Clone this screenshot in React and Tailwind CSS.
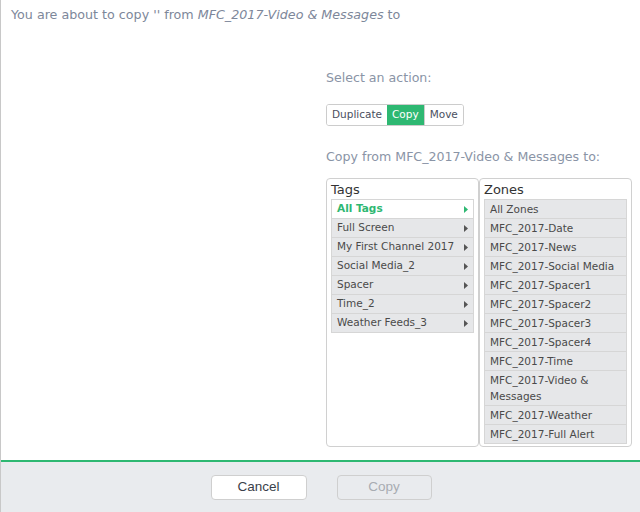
import React from "react";

const tags = ["All Tags", "Full Screen", "My First Channel 2017", "Social Media_2", "Spacer", "Time_2", "Weather Feeds_3"];
const zones = [
  "All Zones",
  "MFC_2017-Date",
  "MFC_2017-News",
  "MFC_2017-Social Media",
  "MFC_2017-Spacer1",
  "MFC_2017-Spacer2",
  "MFC_2017-Spacer3",
  "MFC_2017-Spacer4",
  "MFC_2017-Time",
  "MFC_2017-Video & Messages",
  "MFC_2017-Weather",
  "MFC_2017-Full Alert",
];

const font = { fontFamily: '"DejaVu Sans", Verdana, sans-serif' };

function Arrow({ green }) {
  return (
    <svg width="4" height="7" viewBox="0 0 4 7" className="shrink-0">
      <path d="M0 0 L4 3.5 L0 7 Z" fill={green ? "#2eb872" : "#555"} />
    </svg>
  );
}

export default function App() {
  return (
    <div className="w-[640px] h-[512px] flex flex-col bg-white border-l border-[#c8c8c8]" style={font}>
      <div className="h-[460px] flex flex-col">
        <div className="pl-[10px] pt-[6px] text-[12.7px] leading-[18px] text-[#7d879a]">
          You are about to copy '' from <i>MFC_2017-Video &amp; Messages</i> to
        </div>
        <div className="ml-[325px] w-[306px] flex flex-col">
          <div className="mt-[45px] text-[12.6px] leading-[18px] text-[#8a94a6]">Select an action:</div>
          <div className="mt-[17px] flex w-fit h-[22px] text-[10.5px] rounded-[3px] border border-[#ccc] overflow-hidden">
            <div className="px-[5px] flex items-center text-[#4a5060] bg-white">Duplicate</div>
            <div className="px-[5px] flex items-center text-white bg-[#2eb872]">Copy</div>
            <div className="px-[5px] flex items-center text-[#4a5060] bg-white border-l border-[#ccc]">Move</div>
          </div>
          <div className="mt-[22px] text-[12.6px] leading-[18px] text-[#8a94a6]">Copy from MFC_2017-Video &amp; Messages to:</div>
          <div className="mt-[12px] flex h-[269px]">
            <div className="w-[153px] rounded-[4px] border border-[#d0d0d0] px-[4px] flex flex-col">
              <div className="text-[13px] leading-[18px] pt-[2px] text-[#333]">Tags</div>
              <div className="flex flex-col">
                {tags.map((t, i) => (
                  <div
                    key={t}
                    className={
                      "h-[20px] flex items-center justify-between pl-[5px] pr-[5px] text-[10.5px] border border-[#d6d6d6] " +
                      (i > 0 ? "-mt-[1px] " : "") +
                      (i === 0 ? "bg-white text-[#2eb872] font-bold" : "bg-[#e6e7e9] text-[#4a4a4a]")
                    }
                  >
                    <span className="whitespace-nowrap">{t}</span>
                    <Arrow green={i === 0} />
                  </div>
                ))}
              </div>
            </div>
            <div className="w-[153px] rounded-[4px] border border-[#d0d0d0] px-[4px] flex flex-col">
              <div className="text-[13px] leading-[18px] pt-[2px] text-[#333]">Zones</div>
              <div className="flex flex-col">
                {zones.map((z, i) => (
                  <div
                    key={z}
                    className={
                      "min-h-[20px] flex items-center pl-[5px] pr-[4px] py-[1px] text-[10.5px] leading-[16px] border border-[#d6d6d6] bg-[#e6e7e9] text-[#4a4a4a] " +
                      (i > 0 ? "-mt-[1px]" : "")
                    }
                  >
                    <span>{z}</span>
                  </div>
                ))}
              </div>
            </div>
          </div>
        </div>
      </div>
      <div className="h-[2px] bg-[#2eb872]" />
      <div className="flex-1 bg-[#e9ebee] flex justify-center items-start gap-[30px] pt-[13px]" style={{ fontFamily: '"Liberation Sans", Arial, sans-serif' }}>
        <div className="w-[96px] h-[25px] ml-[1px] rounded-[4px] border border-[#cfcfcf] bg-white flex items-center justify-center text-[13.5px] text-[#3a3f4a]">
          Cancel
        </div>
        <div className="w-[95px] h-[25px] rounded-[4px] border border-[#cfcfcf] bg-[#e9ebee] flex items-center justify-center text-[13.5px] text-[#a8acb2]">
          Copy
        </div>
      </div>
    </div>
  );
}
